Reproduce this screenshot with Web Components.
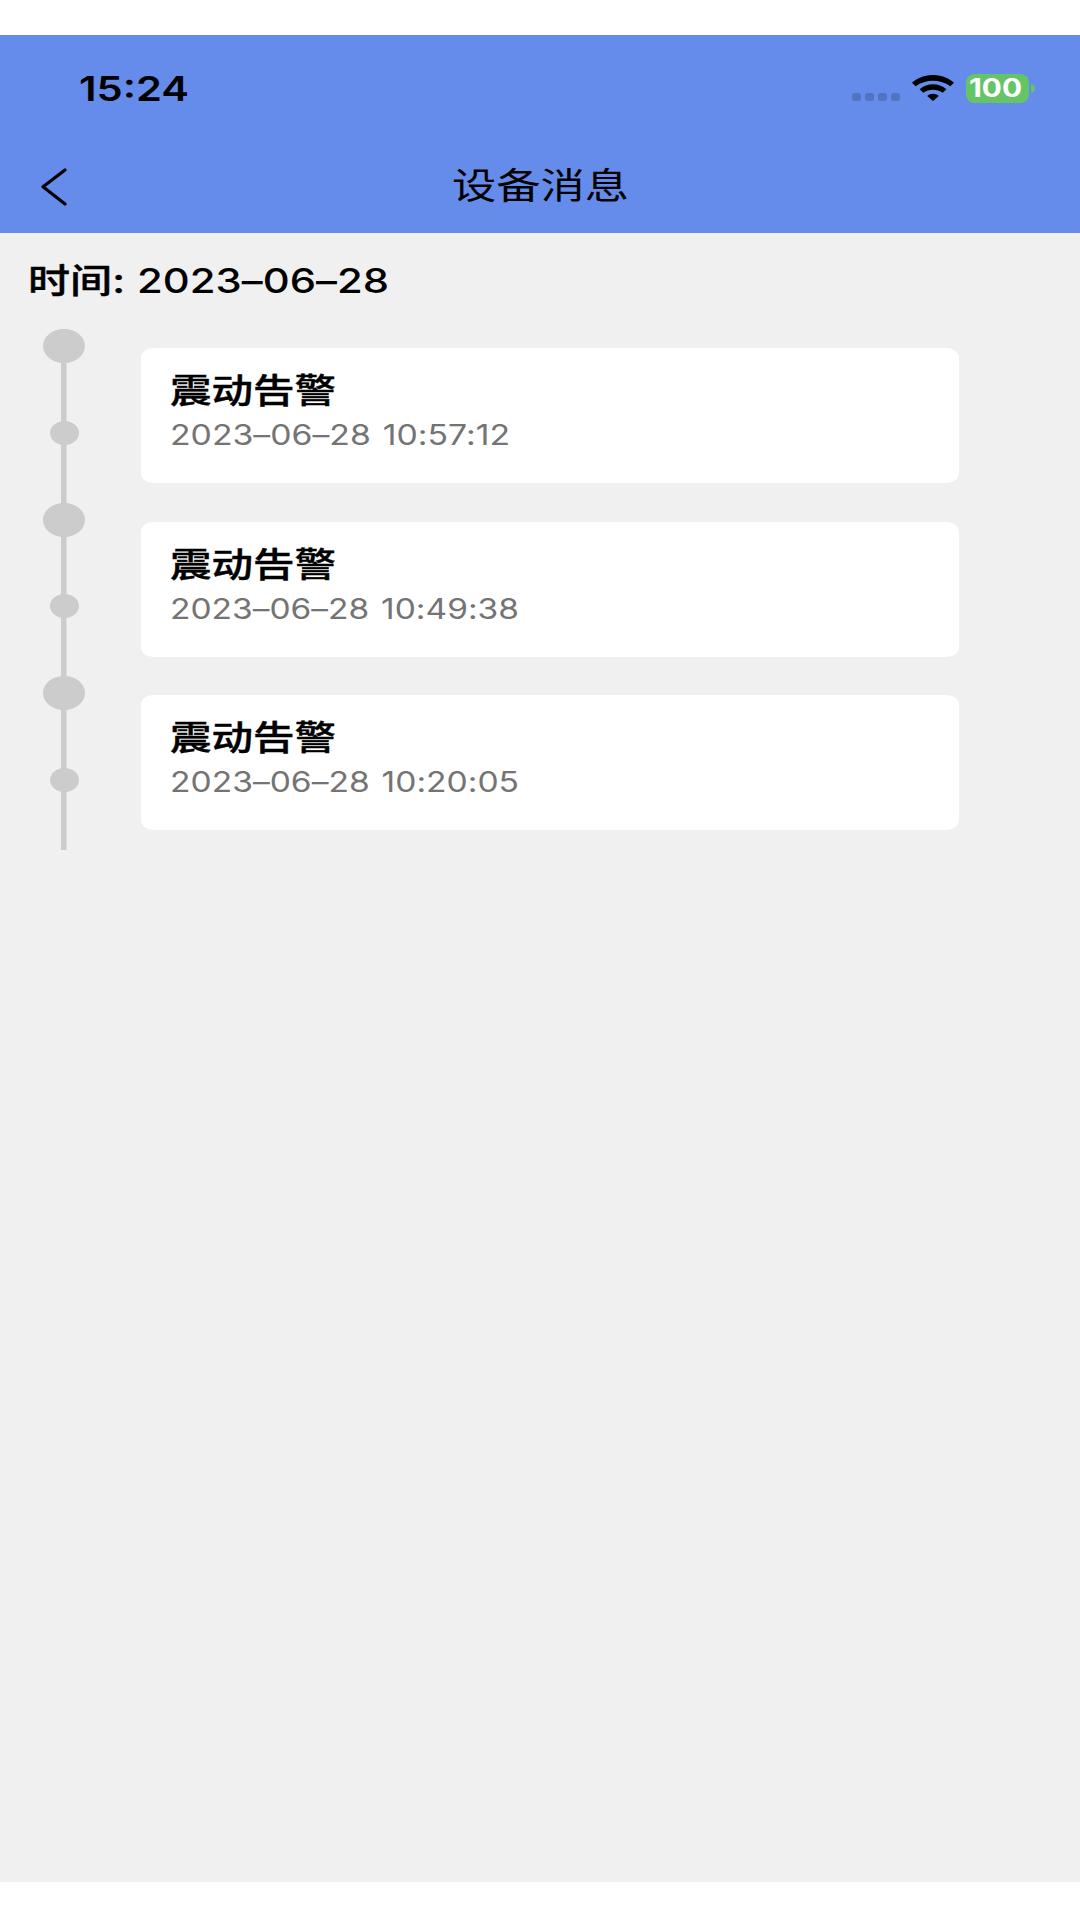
<!DOCTYPE html>
<html lang="zh-CN">
<head>
<meta charset="utf-8">
<title>设备消息</title>
<style>
    body {
        margin: 0;
        background: #fff;
        font-family: Inter, "Noto Sans CJK SC", sans-serif;
        color: #000;
    }
</style>
</head>
<body>
<device-messages-page></device-messages-page>

<script>
// One line of text, stretched sideways to the given width
class WideText extends HTMLElement {
    constructor() {
        super();
        this._shadowRoot = this.attachShadow({mode: "open"});
    }

    connectedCallback() {
        const width = Number(this.getAttribute('width'));
        this._shadowRoot.innerHTML = `
            <style>
                :host {
                    display: block;
                    flex: none;
                    width: ${width}px;
                    white-space: nowrap;
                }

                span {
                    display: inline-block;
                    vertical-align: top;
                    transform-origin: 0 50%;
                }
            </style>
            <span><slot></slot></span>
        `;
        const span = this._shadowRoot.querySelector('span');
        span.style.transform = `scaleX(${width / span.getBoundingClientRect().width})`;
    }
}

class StatusBar extends HTMLElement {
    constructor() {
        super();
        this._shadowRoot = this.attachShadow({mode: "open"});
    }

    connectedCallback() {
        this._shadowRoot.innerHTML = `
            <style>
                :host {
                    display: flex;
                    align-items: center;
                    justify-content: space-between;
                    height: 107px;
                    padding: 0 45px 0 79px;
                    box-sizing: border-box;
                }

                .time {
                    font-size: 34px;
                    line-height: 40px;
                    font-weight: 600;
                }

                .icons {
                    display: flex;
                    align-items: center;
                }

                .signal {
                    display: flex;
                    gap: 4px;
                    margin: 17px 12px 0 0;
                }

                .signal i {
                    width: 9px;
                    height: 8px;
                    border-radius: 2.5px;
                    background: #5274c0;
                }

                .wifi {
                    margin: 0 12px 1px 0;
                }

                .battery {
                    display: flex;
                    align-items: center;
                    width: 63px;
                    height: 29px;
                    padding-left: 3px;
                    box-sizing: border-box;
                    border-radius: 9px / 8px;
                    background: #65c466;
                    color: #fff;
                    font-size: 25px;
                    line-height: 31px;
                    font-weight: 700;
                }

                .cap {
                    margin-left: 2.5px;
                }
            </style>
            <wide-text class="time" width="110">15:24</wide-text>
            <div class="icons">
                <div class="signal"><i></i><i></i><i></i><i></i></div>
                <svg class="wifi" width="42" height="26" viewBox="0 0 42 26">
                    <path d="M0 7.7C11.5-2.6 30.5-2.6 42 7.7L38.3 11.2C28.5 3.8 13.5 3.8 3.7 11.2Z"/>
                    <path d="M7.6 14.2C15.2 7.7 26.8 7.7 34.4 14.2L30.7 17.7C25.2 13.7 16.8 13.7 11.3 17.7Z"/>
                    <path d="M15.2 21C18.5 17.9 23.5 17.9 26.8 21L21 26Z"/>
                </svg>
                <div class="battery"><wide-text width="53">100</wide-text></div>
                <svg class="cap" width="4" height="9" viewBox="0 0 4 9">
                    <path d="M0 0Q4 1.5 4 4.5T0 9Z" fill="#65c466"/>
                </svg>
            </div>
        `;
    }
}

class NavBar extends HTMLElement {
    constructor() {
        super();
        this._shadowRoot = this.attachShadow({mode: "open"});
    }

    connectedCallback() {
        this._shadowRoot.innerHTML = `
            <style>
                :host {
                    display: grid;
                    grid-template-columns: 1fr auto 1fr;
                    align-items: center;
                    height: 88px;
                    padding: 0 40px;
                }

                .title {
                    font-size: 36px;
                    line-height: 50px;
                    font-weight: 400;
                }

                svg {
                    display: block;
                    margin-top: 1px;
                }
            </style>
            <svg width="27" height="38" viewBox="0 0 27 38">
                <path d="M25 2L3 18.8L25 36" fill="none" stroke="#000" stroke-width="3.2" stroke-linecap="round" stroke-linejoin="round"/>
            </svg>
            <wide-text class="title" width="177"><slot></slot></wide-text>
        `;
    }
}

class TimelineItem extends HTMLElement {
    constructor() {
        super();
        this._shadowRoot = this.attachShadow({mode: "open"});
    }

    connectedCallback() {
        this._shadowRoot.innerHTML = `
            <style>
                :host {
                    display: flex;
                    height: 173.5px;
                }

                .rail {
                    display: flex;
                    flex-direction: column;
                    align-items: center;
                    width: 42px;
                    margin-left: 43px;
                    background: linear-gradient(#ccc, #ccc) 50% 0 / 5.5px 100% no-repeat;
                }

                .dot {
                    width: 42px;
                    height: 34px;
                    border-radius: 50%;
                    background: #ccc;
                }

                .dot.small {
                    width: 29px;
                    height: 24px;
                    margin-top: 57.5px;
                }

                .card {
                    width: 818px;
                    height: 135px;
                    margin: 19px 0 0 56px;
                    padding: 18px 0 0 29px;
                    box-sizing: border-box;
                    border-radius: 12px / 10px;
                    background: #fff;
                }

                .title {
                    font-size: 34px;
                    line-height: 50px;
                    font-weight: 500;
                    -webkit-text-stroke: 0.4px #000;
                }

                .date {
                    font-size: 28px;
                    line-height: 39px;
                    color: #747474;
                    font-feature-settings: "calt" 0;
                    word-spacing: 2px;
                }
            </style>
            <div class="rail">
                <div class="dot"></div>
                <div class="dot small"></div>
            </div>
            <div class="card">
                <wide-text class="title" width="166"><slot></slot></wide-text>
                <wide-text class="date" width="${this.getAttribute('date-width')}">${this.getAttribute('date')}</wide-text>
            </div>
        `;
    }
}

class DeviceMessagesPage extends HTMLElement {
    constructor() {
        super();
        this._shadowRoot = this.attachShadow({mode: "open"});
    }

    connectedCallback() {
        this._shadowRoot.innerHTML = `
            <style>
                :host {
                    display: flex;
                    flex-direction: column;
                    width: 1080px;
                    height: 1920px;
                    padding: 35px 0 38px;
                    box-sizing: border-box;
                    overflow: hidden;
                }

                header {
                    height: 197.5px;
                    background: #658ceb;
                }

                main {
                    flex: 1;
                    background: #f0f0f0;
                }

                .day {
                    display: flex;
                    height: 96.5px;
                    padding: 23px 0 0 28px;
                    box-sizing: border-box;
                    font-size: 34px;
                    line-height: 50px;
                    font-weight: 500;
                    font-feature-settings: "calt" 0;
                }

                .label {
                    -webkit-text-stroke: 0.4px #000;
                }

                .value {
                    margin-left: 12px;
                }
            </style>
            <header>
                <status-bar></status-bar>
                <nav-bar>设备消息</nav-bar>
            </header>
            <main>
                <div class="day">
                    <wide-text class="label" width="97">时间:</wide-text>
                    <wide-text class="value" width="252">2023–06–28</wide-text>
                </div>
                <timeline-item date="2023–06–28 10:57:12" date-width="340">震动告警</timeline-item>
                <timeline-item date="2023–06–28 10:49:38" date-width="349">震动告警</timeline-item>
                <timeline-item date="2023–06–28 10:20:05" date-width="349">震动告警</timeline-item>
            </main>
        `;
    }
}

customElements.define('wide-text', WideText);
customElements.define('status-bar', StatusBar);
customElements.define('nav-bar', NavBar);
customElements.define('timeline-item', TimelineItem);
customElements.define('device-messages-page', DeviceMessagesPage);
</script>
</body>
</html>
